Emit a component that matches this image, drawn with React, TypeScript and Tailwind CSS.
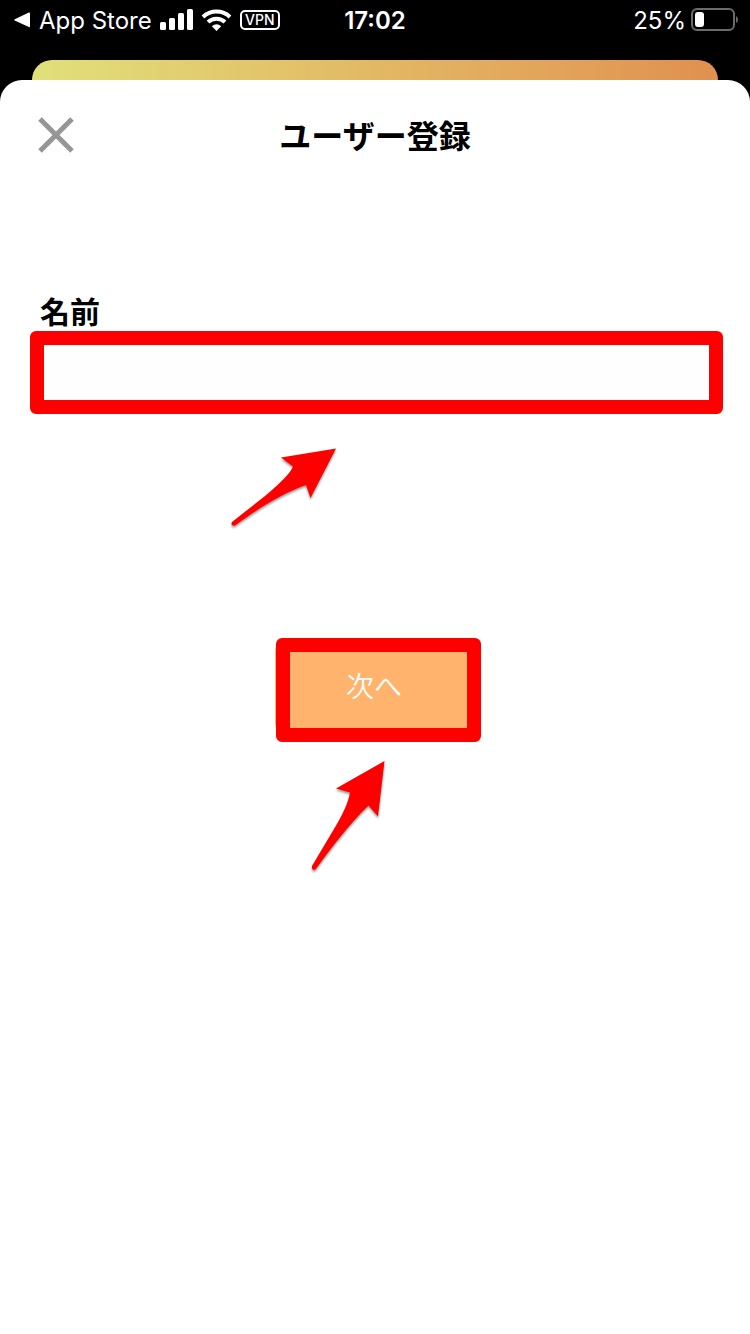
import React, { useState } from "react";

function StatusBar() {
  return (
    <header className="grid h-[60px] grid-cols-[1fr_auto_1fr] items-start font-['Inter',sans-serif] text-2xl text-white">
      <div className="flex h-10 items-center pl-3.5">
        <a href="#app-store" className="flex h-10 items-center gap-2">
          <svg width="17" height="16" viewBox="0 0 17 16" fill="#fff" aria-hidden="true">
            <path d="M0.8 7.2 L14.8 0.6 Q16 0.2 16 1.6 V14.2 Q16 15.6 14.8 15.1 L0.8 8.6 Q-0.4 7.9 0.8 7.2Z" />
          </svg>
          <span className="pt-0.5">App Store</span>
        </a>
        <svg className="ml-2" width="33" height="22" viewBox="0 0 33 22" fill="#fff" aria-hidden="true">
          <rect x="0" y="13" width="6" height="8" rx="1.5" />
          <rect x="9" y="9" width="6" height="12" rx="1.5" />
          <rect x="18" y="4" width="6" height="17" rx="1.5" />
          <rect x="27" y="0" width="6" height="21" rx="1.5" />
        </svg>
        <svg className="ml-2" width="31" height="22" viewBox="0 0 31 22" aria-hidden="true">
          <path d="M2 8 A19.5 19.5 0 0 1 29 8" fill="none" stroke="#fff" strokeWidth="4" />
          <path d="M7 13 A12.5 12.5 0 0 1 24 13" fill="none" stroke="#fff" strokeWidth="4" />
          <path d="M10.8 17.2 Q15.5 13.4 20.2 17.2 L15.5 22Z" fill="#fff" />
        </svg>
        <span className="ml-2 flex h-5 w-10 items-center justify-center rounded-[5px] border-2 border-white text-sm font-medium">
          VPN
        </span>
      </div>
      <time className="flex h-10 items-center pt-0.5 font-semibold">17:02</time>
      <div className="flex h-10 items-center justify-end gap-1 pr-3">
        <span className="pt-0.5">25%</span>
        <svg width="48" height="24" viewBox="0 0 48 24" aria-hidden="true">
          <rect x="2" y="1" width="42" height="21" rx="5" fill="none" stroke="#6b6b6b" strokeWidth="2" />
          <rect x="5" y="4" width="9" height="15" rx="3" fill="#fff" />
          <path d="M46 8 Q48 9 48 11.500 Q48 14 46 15Z" fill="#6b6b6b" />
        </svg>
      </div>
    </header>
  );
}

export default function App() {
  const [name, setName] = useState("");

  return (
    <div className="flex min-h-screen flex-col bg-black font-['Noto_Sans_CJK_JP',sans-serif]">
      <StatusBar />
      <div className="mx-8 h-5 rounded-t-[20px] bg-linear-to-r from-[#e0e07a] to-[#e09050]" />
      <main className="flex flex-1 flex-col rounded-t-[22px] bg-white text-black">
        <div className="grid h-[110px] grid-cols-[1fr_auto_1fr] items-center px-[38px]">
          <button type="button" aria-label="閉じる" className="justify-self-start">
            <svg width="36" height="36" viewBox="0 0 36 36" fill="none" stroke="#969696" strokeWidth="5" aria-hidden="true">
              <path d="M2 2 L34 34 M34 2 L2 34" />
            </svg>
          </button>
          <h1 className="pb-0.5 text-[32px] leading-10 font-bold">ユーザー登録</h1>
        </div>

        <form className="flex flex-col pt-[100px]" onSubmit={(e) => e.preventDefault()}>
          <label htmlFor="name" className="pb-px pl-10 text-[30px] leading-10 font-bold">
            名前
          </label>
          <div className="mr-[27px] ml-[30px] rounded-md border-[14px] border-[#ff0000]">
            <input
              id="name"
              type="text"
              value={name}
              onChange={(e) => setName(e.target.value)}
              className="block h-[55px] w-full bg-[#fefefe] px-2 text-3xl outline-none"
            />
          </div>
          <div className="flex justify-center pt-[33px] pr-[184px]">
            <svg className="overflow-visible drop-shadow-[0_2px_1px_rgba(0,0,0,0.4)]" width="106" height="80" viewBox="230 447 106 80" fill="#ff0000" aria-hidden="true">
              <path d="M336 448.500 L281 457.500 L293 466.500 Q290 475 265 496 L232 522 Q230 526 235 525.500 C255 511 280 494 306 485 L310.500 498Z" />
            </svg>
          </div>

          <div className="relative mt-28 h-24 w-[200px] self-center">
            <button type="submit" className="h-full w-full rounded-xl bg-[#ffb36c] pr-0.5 pb-1 text-[28px] font-[350] text-white">
              次へ
            </button>
            <span className="pointer-events-none absolute -top-px -right-1.5 -bottom-[7px] left-px rounded-md border-[14px] border-[#ff0000]" />
          </div>
          <div className="flex justify-center pt-[26px] pr-[54px]">
            <svg className="overflow-visible drop-shadow-[0_2px_1px_rgba(0,0,0,0.4)]" width="74" height="110" viewBox="311 761 74 110" fill="#ff0000" aria-hidden="true">
              <path d="M384.500 761 L336 788.500 L350 792.500 Q348 806 334 829 L312 866 Q311 870.500 315.500 869.500 C329 851 349 824 368.500 805.500 L378 816.500Z" />
            </svg>
          </div>
        </form>
      </main>
    </div>
  );
}
